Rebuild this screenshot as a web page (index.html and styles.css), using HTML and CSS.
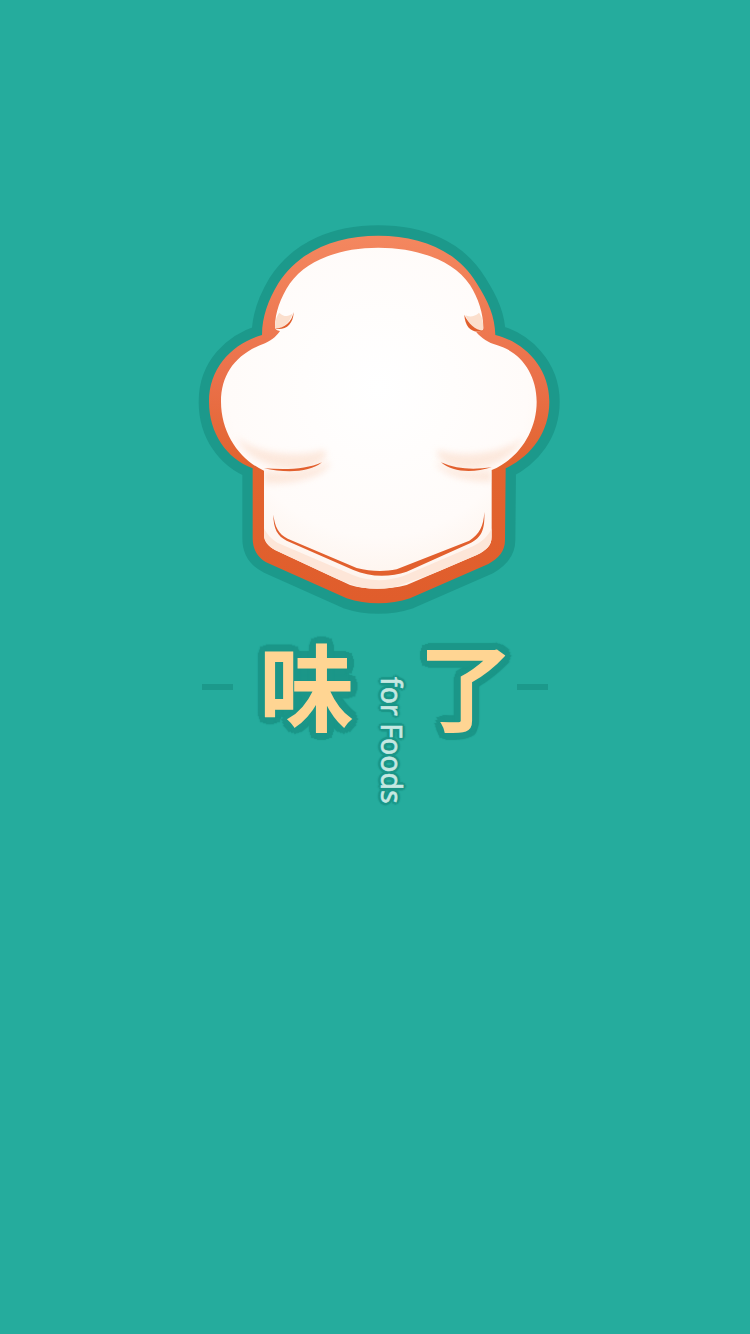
FILE: index.html
```html
<!DOCTYPE html>
<html lang="zh-CN">
<head>
    <meta charset="UTF-8">
    <meta name="viewport" content="width=device-width, initial-scale=1.0">
    <title>味了</title>
    <link rel="stylesheet" href="styles.css">
</head>
<body>

<div class="splash">
    <svg class="logo" viewBox="0 0 1110 1200" aria-label="chef hat">
        <defs>
            <linearGradient id="rim" x1="0" y1="0" x2="0" y2="1">
                <stop offset="0" stop-color="#f4875f"/>
                <stop offset="0.4" stop-color="#ea7049"/>
                <stop offset="0.62" stop-color="#e2642f"/>
                <stop offset="1" stop-color="#e05d2c"/>
            </linearGradient>
            <radialGradient id="puff" gradientUnits="userSpaceOnUse" cx="565" cy="500" r="640">
                <stop offset="0" stop-color="#ffffff"/>
                <stop offset="0.7" stop-color="#fffbf9"/>
                <stop offset="0.88" stop-color="#fef5ef"/>
                <stop offset="1" stop-color="#fdeee4"/>
            </radialGradient>
            <filter id="soft" x="-30%" y="-30%" width="160%" height="160%">
                <feGaussianBlur stdDeviation="9"/>
            </filter>
            <clipPath id="bodyClip">
                <path d="M565 83C680 83 790 120 840 195C865 235 880 280 880 325C880 335 865 335 858 335C875 355 895 368 920 375C990 395 1040 460 1040 545C1040 640 980 720 905 750L905 950C905 975 890 990 860 1005L650 1095C590 1110 530 1110 480 1095L255 990C235 978 222 965 222 945L222 752C150 720 93 640 93 545C93 460 140 400 225 370C250 358 262 345 270 333C262 330 255 330 255 320C255 280 270 235 300 190C350 120 450 83 565 83Z"/>
            </clipPath>
        </defs>
        <!-- outer teal halo + orange rim -->
        <path class="hat-halo" d="M565 47C690 47 800 90 860 190C895 245 915 290 916 345C1000 365 1078 440 1078 545C1078 640 1020 710 947 745L945 960C945 995 925 1015 895 1032L660 1135C600 1155 530 1155 470 1135L235 1030C205 1015 188 990 188 955L188 745C110 715 57 640 57 545C57 440 130 370 216 345C216 290 235 240 265 190C330 90 440 47 565 47Z"/>
        <path fill="url(#rim)" d="M565 47C690 47 800 90 860 190C895 245 915 290 916 345C1000 365 1078 440 1078 545C1078 640 1020 710 947 745L945 960C945 995 925 1015 895 1032L660 1135C600 1155 530 1155 470 1135L235 1030C205 1015 188 990 188 955L188 745C110 715 57 640 57 545C57 440 130 370 216 345C216 290 235 240 265 190C330 90 440 47 565 47Z"/>
        <!-- white body -->
        <path fill="url(#puff)" d="M565 83C680 83 790 120 840 195C865 235 880 280 880 325C880 335 865 335 858 335C875 355 895 368 920 375C990 395 1040 460 1040 545C1040 640 980 720 905 750L905 950C905 975 890 990 860 1005L650 1095C590 1110 530 1110 480 1095L255 990C235 978 222 965 222 945L222 752C150 720 93 640 93 545C93 460 140 400 225 370C250 358 262 345 270 333C262 330 255 330 255 320C255 280 270 235 300 190C350 120 450 83 565 83Z"/>
        <!-- peach shading -->
        <g clip-path="url(#bodyClip)">
            <path class="hat-shade" d="M255 322C256 296 262 286 268 278C280 290 295 292 308 280C300 305 285 322 262 328C258 328 255 326 255 322Z"/>
            <path class="hat-shade" d="M880 322C879 296 873 286 867 278C855 290 838 292 826 286C836 310 850 325 872 333C877 333 880 328 880 322Z"/>
            <path class="hat-blur" d="M140 650C190 700 320 715 400 690C420 700 400 735 340 745C260 755 170 720 140 650Z"/>
            <path class="hat-blur" d="M1000 650C950 700 820 715 745 690C730 700 760 735 810 745C880 755 970 720 1000 650Z"/>
            <path class="hat-blur" d="M222 752C290 760 360 757 420 725C420 760 330 795 222 790Z"/>
            <path class="hat-blur" d="M905 750C850 760 780 757 735 725C750 760 820 785 905 785Z"/>
            <path class="hat-band" d="M222 925C232 945 245 958 262 968L490 1066C540 1085 590 1085 640 1068L850 978C872 968 895 950 905 925L905 1000L560 1120L222 1000Z"/>
        </g>
        <!-- orange crease lines -->
        <path class="hat-crease" d="M311 276C305 305 285 325 255 326C285 332 310 315 311 276Z"/>
        <path class="hat-crease" d="M823 284C835 310 855 330 880 332C850 342 825 325 823 284Z"/>
        <path class="hat-crease" d="M396 727C350 748 290 750 222 745C290 760 360 757 396 727Z"/>
        <path class="hat-crease" d="M753 727C800 748 850 750 905 742C850 760 785 757 753 727Z"/>
        <path class="hat-crease" d="M250 884C250 925 262 948 290 962L490 1050C540 1072 600 1072 650 1055L840 970C875 952 885 930 883 876C880 920 870 940 838 962L620 1048C580 1056 540 1054 500 1044L293 956C265 942 255 920 250 884Z"/>
    </svg>

    <div class="brand">
        <span class="brand-dash"></span>
        <span class="brand-char">味</span>
        <span class="brand-sub">for Foods</span>
        <span class="brand-char brand-char-right">了</span>
        <span class="brand-dash"></span>
    </div>
</div>

</body>
</html>
```

FILE: styles.css
```css
html, body {
    margin: 0;
    height: 100%;
}
body {
    background-color: #25ac9d;
    overflow: hidden;
}
.splash {
    display: flex;
    flex-direction: column;
    align-items: center;
    height: 1334px;
    padding-top: 220px;
    box-sizing: border-box;
}
.logo {
    display: block;
    width: 370px;
    height: 400px;
}
.hat-halo {
    fill: #1c998b;
    stroke: #1c998b;
    stroke-width: 62;
    stroke-linejoin: round;
}
.hat-shade {
    fill: #fbdfcd;
}
.hat-blur {
    fill: #fbdcc9;
    opacity: 0.6;
    filter: url(#soft);
}
.hat-band {
    fill: #fde6d8;
}
.hat-crease {
    fill: #e2602e;
}
.brand {
    display: grid;
    grid-template-columns: 31px 147px 25px 112px 31px;
    width: 346px;
    height: 170px;
    margin-top: 10px;
    align-items: start;
    justify-content: center;
}
.brand-dash {
    height: 6px;
    margin-top: 54px;
    background-color: #1c998b;
}
.brand-char {
    margin-top: -2px;
    font-family: "Noto Sans CJK SC", sans-serif;
    font-size: 94px;
    font-weight: 500;
    line-height: 110px;
    text-align: center;
    color: #ffd593;
    -webkit-text-stroke: 2px #ffd593;
    text-shadow:
        8px 0 1px #1b9688, -8px 0 1px #1b9688, 0 8px 1px #1b9688, 0 -8px 1px #1b9688,
        6px 6px 1px #1b9688, -6px 6px 1px #1b9688, 6px -6px 1px #1b9688, -6px -6px 1px #1b9688,
        7px 3px 1px #1b9688, -7px 3px 1px #1b9688, 7px -3px 1px #1b9688, -7px -3px 1px #1b9688,
        3px 7px 1px #1b9688, -3px 7px 1px #1b9688, 3px -7px 1px #1b9688, -3px -7px 1px #1b9688;
}
.brand-char-right {
    padding-left: 10px;
}
.brand-sub {
    writing-mode: vertical-rl;
    margin-top: 47px;
    font-family: "Noto Sans", sans-serif;
    font-size: 28.5px;
    line-height: 27px;
    white-space: nowrap;
    color: #c6e8e2;
    -webkit-text-stroke: 0.6px #c6e8e2;
    text-shadow:
        3px 0 1px #1b9688, -3px 0 1px #1b9688, 0 3px 1px #1b9688, 0 -3px 1px #1b9688,
        2px 2px 1px #1b9688, -2px 2px 1px #1b9688, 2px -2px 1px #1b9688, -2px -2px 1px #1b9688;
}
```
